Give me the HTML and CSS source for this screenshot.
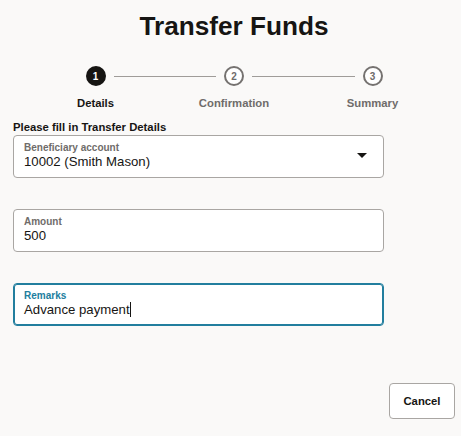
FILE: index.html
```html
<!DOCTYPE html>
<html lang="en">
<head>
<meta charset="utf-8">
<title>Transfer Funds</title>
<link rel="stylesheet" href="styles.css">
</head>
<body>
<div class="page">
  <h1 class="title">Transfer Funds</h1>

  <div class="train">
    <div class="train-row">
      <span class="step-dot step-dot-active">1</span>
      <span class="connector"></span>
      <span class="step-dot">2</span>
      <span class="connector"></span>
      <span class="step-dot">3</span>
    </div>
    <div class="train-labels">
      <span class="step-label step-label-active">Details</span>
      <span class="step-label">Confirmation</span>
      <span class="step-label">Summary</span>
    </div>
  </div>

  <div class="section-title">Please fill in Transfer Details</div>

  <div class="fields">
    <div class="field field-select">
      <div class="field-body">
        <div class="field-label">Beneficiary account</div>
        <div class="field-value">10002 (Smith Mason)</div>
      </div>
      <svg class="select-arrow" width="10" height="5" viewBox="0 0 10 5" aria-hidden="true"><polygon points="0,0 10,0 5,5" fill="#161513"/></svg>
    </div>

    <div class="field">
      <div class="field-body">
        <div class="field-label">Amount</div>
        <div class="field-value">500</div>
      </div>
    </div>

    <div class="field field-focused">
      <div class="field-body">
        <div class="field-label">Remarks</div>
        <div class="field-value">Advance payment<span class="caret"></span></div>
      </div>
    </div>
  </div>

  <div class="actions">
    <button class="btn" type="button">Cancel</button>
  </div>
</div>
</body>
</html>
```

FILE: styles.css
```css
html, body {
  margin: 0;
  padding: 0;
}

body {
  background: #faf9f8;
  color: #161513;
  font-family: "Liberation Sans", Arial, sans-serif;
}

.page {
  padding: 0 6px 0 13px;
}

.title {
  margin: 0;
  padding-top: 11px;
  font-size: 26.2px;
  line-height: 30px;
  font-weight: bold;
  text-align: center;
  color: #161513;
}

.train {
  width: 415.5px;
  margin: 25px auto 0;
}

.train-row {
  display: flex;
  align-items: center;
  padding: 0 59.25px;
  height: 20px;
}

.step-dot {
  box-sizing: border-box;
  width: 20px;
  height: 20px;
  flex: 0 0 20px;
  border-radius: 50%;
  border: 2px solid #757270;
  background: #ffffff;
  color: #6f6c6a;
  font-size: 10px;
  font-weight: bold;
  display: flex;
  align-items: center;
  justify-content: center;
}

.step-dot-active {
  background: #161513;
  border-color: #161513;
  color: #ffffff;
}

.connector {
  flex: 1;
  height: 1px;
  margin: 0 8px;
  background: #9f9c99;
}

.train-labels {
  display: grid;
  grid-template-columns: repeat(3, 1fr);
  margin-top: 10px;
}

.step-label {
  text-align: center;
  font-size: 11.3px;
  line-height: 14px;
  font-weight: bold;
  color: #6f6c6a;
}

.step-label-active {
  color: #161513;
}

.section-title {
  margin-top: 10px;
  font-size: 11.3px;
  line-height: 14px;
  font-weight: bold;
  color: #161513;
}

.fields {
  margin-top: 1px;
  display: flex;
  flex-direction: column;
  gap: 31px;
}

.field {
  box-sizing: border-box;
  width: 371px;
  height: 43px;
  border: 1px solid #a9a6a3;
  border-radius: 4px;
  background: #ffffff;
  display: flex;
  align-items: center;
  padding: 0 16px 0 10px;
}

.field-body {
  flex: 1;
  padding: 6px 0 7px;
}

.field-label {
  font-size: 10px;
  line-height: 12px;
  font-weight: bold;
  color: #6f6c6a;
}

.field-value {
  font-size: 13.2px;
  line-height: 16px;
  color: #161513;
}

.select-arrow {
  display: block;
  flex: 0 0 10px;
  margin-top: -2px;
}

.field-focused {
  border-color: #227e9e;
  box-shadow: inset 0 0 0 1px #227e9e;
}

.field-focused .field-label {
  color: #227e9e;
}

.caret {
  display: inline-block;
  width: 1px;
  height: 15px;
  background: #161513;
  vertical-align: -3px;
}

.actions {
  display: flex;
  justify-content: flex-end;
  margin-top: 57px;
}

.btn {
  box-sizing: border-box;
  height: 36px;
  padding: 0 13.5px;
  border: 1px solid #a9a6a3;
  border-radius: 4px;
  background: #ffffff;
  color: #161513;
  font-family: "Liberation Sans", Arial, sans-serif;
  font-size: 11.3px;
  font-weight: bold;
  cursor: pointer;
}
```
